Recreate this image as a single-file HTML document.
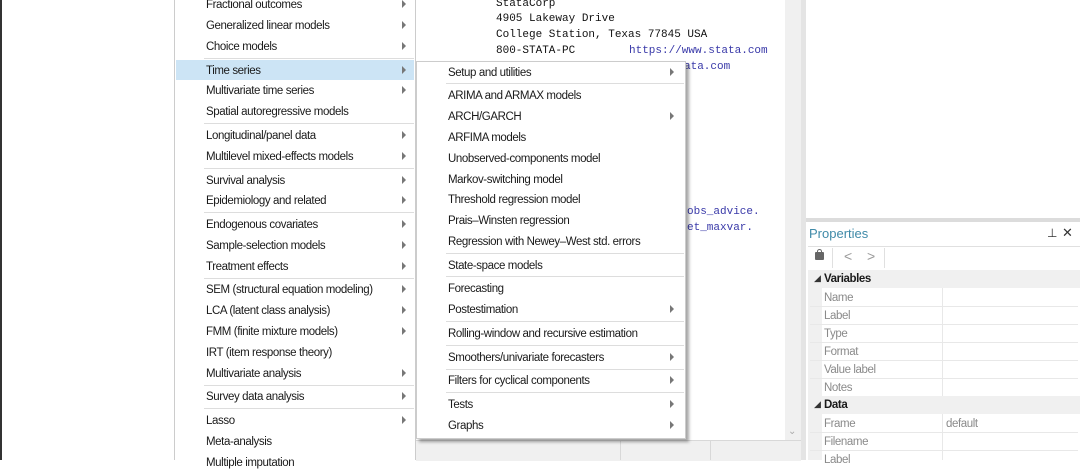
<!DOCTYPE html>
<html><head><meta charset="utf-8"><style>
body{margin:0;width:1080px;height:460px;overflow:hidden;position:relative;background:#fff;font-family:"Liberation Sans",sans-serif;font-size:11.5px;letter-spacing:-0.4px;color:#1a1a1a}
.a{position:absolute;white-space:nowrap}
.m{font-family:"Liberation Mono",monospace;font-size:11px;letter-spacing:0;color:#111}
.lk{color:#3838a8}
.arr{position:absolute;width:0;height:0;border-left:4px solid #777;border-top:4px solid transparent;border-bottom:4px solid transparent}
.sep{position:absolute;height:1px;background:#ddd}
.pl{position:absolute;left:824px;color:#8a8a8a}
.pr{position:absolute;left:810px;width:268px;height:1px;background:#e8e8e8}
</style></head><body>
<div class="a" style="left:0;top:0;width:2px;height:460px;background:#333"></div>
<div class="a m" style="left:496px;top:-2px">StataCorp</div>
<div class="a m" style="left:496px;top:13px">4905 Lakeway Drive</div>
<div class="a m" style="left:496px;top:29px">College Station, Texas 77845 USA</div>
<div class="a m" style="left:496px;top:45px">800-STATA-PC</div>
<div class="a m lk" style="left:629px;top:45px">https://www.stata.com</div>
<div class="a m lk" style="left:684px;top:61px">ata.com</div>
<div class="a m lk" style="left:687px;top:206px">obs_advice.</div>
<div class="a m lk" style="left:687px;top:222px">et_maxvar.</div>
<div class="a" style="left:785px;top:0;width:16px;height:440px;background:#f0f0f0"></div>
<div class="a" style="left:788px;top:426px;color:#aaa;font-size:10px">⌄</div>
<div class="a" style="left:801px;top:0;width:5px;height:460px;background:#e4e4e4"></div>
<div class="a" style="left:416px;top:440px;width:385px;height:20px;background:#f0f0f0;border-top:1px solid #d8d8d8"></div>
<div class="a" style="left:620px;top:441px;width:1px;height:19px;background:#d8d8d8"></div>
<div class="a" style="left:710px;top:441px;width:1px;height:19px;background:#d8d8d8"></div>
<div class="a" style="left:806px;top:218px;width:274px;height:4px;background:#dcdcdc"></div>
<div class="a" style="left:809px;top:226px;color:#3f8aa8;font-size:13px;letter-spacing:0">Properties</div>
<div class="a" style="left:1047px;top:226px;font-size:12px;color:#333">⊥</div>
<div class="a" style="left:1062px;top:225px;font-size:13px;color:#333">✕</div>
<div class="a" style="left:808px;top:246px;width:272px;height:1px;background:#e0e0e0"></div>
<div class="a" style="left:815px;top:252px;width:9px;height:8px;background:#666;border-radius:1px"></div>
<div class="a" style="left:817px;top:249px;width:3px;height:4px;border:1px solid #666;border-bottom:0;border-radius:3px 3px 0 0"></div>
<div class="a" style="left:832px;top:248px;width:1px;height:20px;background:#e0e0e0"></div>
<div class="a" style="left:844px;top:248px;color:#999;font-size:14px">&lt;</div>
<div class="a" style="left:867px;top:248px;color:#999;font-size:14px">&gt;</div>
<div class="a" style="left:884px;top:248px;width:1px;height:20px;background:#e0e0e0"></div>
<div class="a" style="left:808px;top:270px;width:272px;height:18px;background:#f0f0f0"></div>
<div class="a" style="left:814px;top:273px;font-size:9px;color:#333">◢</div>
<div class="a" style="left:824px;top:273px;font-weight:bold">Variables</div>
<div class="a" style="left:808px;top:288px;width:14px;height:172px;background:#f0f0f0"></div>
<div class="a" style="left:942px;top:288px;width:1px;height:172px;background:#e8e8e8"></div>
<div class="pl" style="top:292px">Name</div><div class="pr" style="top:306px"></div>
<div class="pl" style="top:310px">Label</div><div class="pr" style="top:324px"></div>
<div class="pl" style="top:328px">Type</div><div class="pr" style="top:342px"></div>
<div class="pl" style="top:346px">Format</div><div class="pr" style="top:360px"></div>
<div class="pl" style="top:364px">Value label</div><div class="pr" style="top:378px"></div>
<div class="pl" style="top:382px">Notes</div>
<div class="a" style="left:808px;top:396px;width:272px;height:18px;background:#f0f0f0"></div>
<div class="a" style="left:814px;top:399px;font-size:9px;color:#333">◢</div>
<div class="a" style="left:824px;top:399px;font-weight:bold">Data</div>
<div class="pl" style="top:418px">Frame</div>
<div class="a" style="left:946px;top:418px;color:#8a8a8a">default</div><div class="pr" style="top:432px"></div>
<div class="pl" style="top:436px">Filename</div><div class="pr" style="top:450px"></div>
<div class="pl" style="top:454px">Label</div>
<div class="a" style="left:174px;top:0;width:240px;height:460px;background:#fff;border-left:1px solid #ccc;border-right:1px solid #ccc"></div>
<div class="a" style="left:176px;top:60px;width:238px;height:20px;background:#cce4f5"></div>
<div id="lm"></div>
<div class="a" style="left:416px;top:61px;width:268px;height:376px;background:#fff;border:1px solid #ccc;box-shadow:3px 3px 3px rgba(0,0,0,.35)"></div>
<div id="sm"></div>
<script>
function build(items,x,ax,sx,sw){let h='';
for(const [t,y,a] of items){ if(t==='-'){h+=`<div class="sep" style="left:${sx}px;top:${y}px;width:${sw}px"></div>`;continue}
h+=`<div class="a" style="left:${x}px;top:${y-5}px">${t}</div>`;if(a)h+=`<div class="arr" style="left:${ax}px;top:${y-4}px"></div>`}
return h}
const L=[["Fractional outcomes",4,1],["Generalized linear models",25,1],["Choice models",46,1],["-",58],["Time series",70,1],["Multivariate time series",90,1],["Spatial autoregressive models",111,0],["-",123],["Longitudinal/panel data",135,1],["Multilevel mixed-effects models",156,1],["-",168],["Survival analysis",180,1],["Epidemiology and related",200,1],["-",212],["Endogenous covariates",224,1],["Sample-selection models",245,1],["Treatment effects",266,1],["-",278],["SEM (structural equation modeling)",289,1],["LCA (latent class analysis)",310,1],["FMM (finite mixture models)",331,1],["IRT (item response theory)",352,0],["Multivariate analysis",373,1],["-",385],["Survey data analysis",396,1],["-",408],["Lasso",420,1],["Meta-analysis",441,0],["Multiple imputation",462,0]];
const S=[["Setup and utilities",72,1],["-",83],["ARIMA and ARMAX models",95,0],["ARCH/GARCH",116,1],["ARFIMA models",137,0],["Unobserved-components model",158,0],["Markov-switching model",179,0],["Threshold regression model",199,0],["Prais–Winsten regression",220,0],["Regression with Newey–West std. errors",241,0],["-",253],["State-space models",265,0],["-",276],["Forecasting",288,0],["Postestimation",309,1],["-",321],["Rolling-window and recursive estimation",333,0],["-",345],["Smoothers/univariate forecasters",357,1],["-",369],["Filters for cyclical components",380,1],["-",392],["Tests",404,1],["Graphs",425,1]];
document.getElementById('lm').innerHTML=build(L,206,402,204,210);
document.getElementById('sm').innerHTML=build(S,448,670,446,238);
</script>
</body></html>
